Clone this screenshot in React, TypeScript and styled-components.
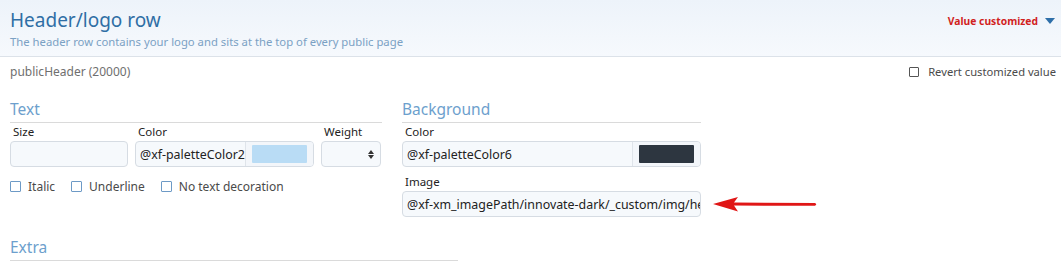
import { FunctionComponent } from "react";
import styled, { createGlobalStyle } from "styled-components";

const GlobalStyle = createGlobalStyle`
  body {
    margin: 0;
    background: #fff;
    font-family: "Noto Sans", "Open Sans", sans-serif;
    color: #222;
  }
`;

const Page = styled.div`
  width: 1061px;
  height: 262px;
  overflow: hidden;
`;

const HeaderBand = styled.div`
  height: 57px;
  box-sizing: border-box;
  padding: 7px 6px 0 10px;
  display: flex;
  justify-content: space-between;
  align-items: flex-start;
  background: linear-gradient(to bottom, #edf3fa, #f6f9fd);
  border-bottom: 1px solid #dce2e9;
`;

const Title = styled.h2`
  margin: 0;
  font-size: 19px;
  font-weight: 400;
  line-height: 26px;
  color: #2f6ea5;
`;

const Subtitle = styled.p`
  margin: 1px 0 0;
  font-size: 11.3px;
  line-height: 16px;
  color: #7ba1c4;
`;

const Customized = styled.div`
  display: flex;
  align-items: center;
  gap: 7px;
  margin-top: 7px;
  font-size: 10.3px;
  font-weight: 700;
  color: #d11f1f;
`;

const Caret = styled.span`
  width: 0;
  height: 0;
  border-left: 5.5px solid transparent;
  border-right: 5.5px solid transparent;
  border-top: 6px solid #2e6fa9;
`;

const MetaRow = styled.div`
  display: flex;
  justify-content: space-between;
  align-items: center;
  padding: 6px 5px 0 10px;
  font-size: 12px;
  line-height: 17px;
`;

const MetaText = styled.span`
  color: #6f6f6f;
`;

const Check = styled.label<{ dark?: boolean }>`
  display: inline-flex;
  align-items: center;
  gap: ${({ dark }) => (dark ? 9 : 7)}px;
  font-size: ${({ dark }) => (dark ? 11.2 : 12)}px;
  color: #4a4a4a;
  &::before {
    content: "";
    width: ${({ dark }) => (dark ? 8 : 9)}px;
    height: ${({ dark }) => (dark ? 8 : 9)}px;
    border: 1.5px solid ${({ dark }) => (dark ? "#555" : "#6d9ac6")};
    border-radius: 1px;
    background: #fff;
  }
`;

const Columns = styled.div`
  display: flex;
  gap: 20px;
  padding: 18px 0 0 10px;
`;

const Section = styled.div<{ width: number }>`
  width: ${({ width }) => width}px;
  flex-shrink: 0;
`;

const SectionTitle = styled.h3`
  margin: 0;
  font-size: 15.5px;
  font-weight: 400;
  line-height: 22px;
  padding-bottom: 2px;
  color: #6d9fcd;
  border-bottom: 1px solid #dadada;
`;

const FieldRow = styled.div`
  display: flex;
  gap: 7px;
`;

const Field = styled.div<{ width: number }>`
  width: ${({ width }) => width}px;
  flex-shrink: 0;
`;

const Label = styled.div`
  font-size: 11.5px;
  line-height: 17px;
  padding: 0 3px;
  margin: 0 0 1px;
  color: #222;
`;

const Input = styled.div`
  height: 26px;
  box-sizing: border-box;
  border: 1px solid #d6dce3;
  border-radius: 4px;
  background: #f6f9fc;
  display: flex;
  align-items: center;
  font-size: 12.4px;
  color: #222;
  overflow: hidden;
  white-space: nowrap;
`;

const InputText = styled.span`
  flex: 1;
  min-width: 0;
  padding: 0 0 0 4px;
  overflow: hidden;
`;

const SwatchBox = styled.div`
  align-self: stretch;
  flex-shrink: 0;
  display: flex;
  align-items: center;
  padding: 0 6px;
  border-left: 1px solid #dfe4ea;
  background: #f3f6fa;
`;

const Swatch = styled.div<{ color: string }>`
  width: 55px;
  height: 18px;
  background: ${({ color }) => color};
  border-radius: 1px;
`;

const SelectArrows = styled.div`
  margin-left: auto;
  margin-right: 6px;
  display: flex;
  flex-direction: column;
  gap: 1px;
  &::before,
  &::after {
    content: "";
    border-left: 3px solid transparent;
    border-right: 3px solid transparent;
  }
  &::before {
    border-bottom: 4px solid #333;
  }
  &::after {
    border-top: 4px solid #333;
  }
`;

const CheckRow = styled.div`
  display: flex;
  gap: 16px;
  margin-top: 11px;
`;

const InlineRow = styled.div`
  display: flex;
  align-items: center;
  gap: 12px;
`;

const Spacer = styled.div`
  height: 6px;
`;

const Extra = styled.div`
  width: 448px;
  margin: 19px 0 0 10px;
`;

const ArrowSvg = styled.svg`
  flex-shrink: 0;
  display: block;
`;

const Arrow: FunctionComponent = () => (
  <ArrowSvg width="106" height="16" viewBox="0 0 106 16">
    <path
      d="M0 8 L25 1 L21 6.6 L102 6.9 Q104.5 8.3 102 9.8 L21 9.6 L25 15.5 Z"
      fill="#e01616"
    />
  </ArrowSvg>
);

const App: FunctionComponent = () => {
  return (
    <Page>
      <GlobalStyle />
      <HeaderBand>
        <div>
          <Title>Header/logo row</Title>
          <Subtitle>
            The header row contains your logo and sits at the top of every public page
          </Subtitle>
        </div>
        <Customized>
          Value customized
          <Caret />
        </Customized>
      </HeaderBand>

      <MetaRow>
        <MetaText>publicHeader (20000)</MetaText>
        <Check dark>Revert customized value</Check>
      </MetaRow>

      <Columns>
        <Section width={372}>
          <SectionTitle>Text</SectionTitle>
          <FieldRow>
            <Field width={118}>
              <Label>Size</Label>
              <Input />
            </Field>
            <Field width={179}>
              <Label>Color</Label>
              <Input>
                <InputText>@xf-paletteColor2</InputText>
                <SwatchBox>
                  <Swatch color="#b9dcf5" />
                </SwatchBox>
              </Input>
            </Field>
            <Field width={60}>
              <Label>Weight</Label>
              <Input>
                <SelectArrows />
              </Input>
            </Field>
          </FieldRow>
          <CheckRow>
            <Check>Italic</Check>
            <Check>Underline</Check>
            <Check>No text decoration</Check>
          </CheckRow>
        </Section>

        <Section width={299}>
          <SectionTitle>Background</SectionTitle>
          <Label>Color</Label>
          <Input>
            <InputText>@xf-paletteColor6</InputText>
            <SwatchBox>
              <Swatch color="#2d3640" />
            </SwatchBox>
          </Input>
          <Spacer />
          <Label>Image</Label>
          <InlineRow>
            <Field width={299}>
              <Input>
                <InputText>@xf-xm_imagePath/innovate-dark/_custom/img/header-bg.png</InputText>
              </Input>
            </Field>
            <Arrow />
          </InlineRow>
        </Section>
      </Columns>

      <Extra>
        <SectionTitle>Extra</SectionTitle>
      </Extra>
    </Page>
  );
};

export default App;
